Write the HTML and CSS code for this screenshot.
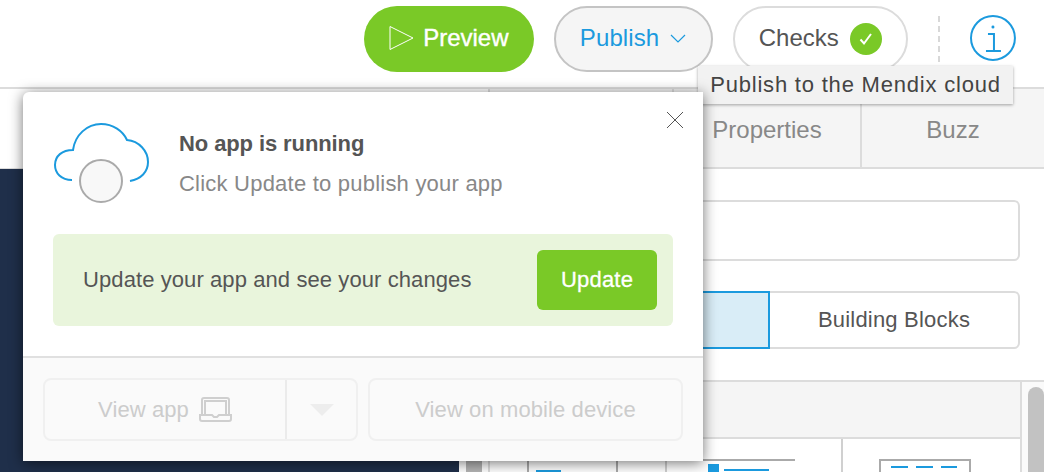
FILE: index.html
```html
<!DOCTYPE html>
<html lang="en">
<head>
<meta charset="UTF-8">
<meta name="viewport" content="width=device-width, initial-scale=1.0">
<title>Publish</title>
<link rel="stylesheet" href="styles.css">
</head>
<body>

<div class="page">
  <header class="topbar">
    <button class="pill pill-preview">
      <svg class="play-icon" width="25" height="26" viewBox="0 0 25 26"><path d="M1 1.500 L24 13 L1 24.500 Z" fill="none" stroke="#fff" stroke-width="1"/></svg>
      Preview
    </button>
    <button class="pill pill-publish">
      Publish
      <svg width="16" height="9" viewBox="0 0 16 9"><path d="M1 1 L8 8 L15 1" fill="none" stroke="#1b9ade" stroke-width="1.200"/></svg>
    </button>
    <button class="pill pill-checks">
      Checks
      <span class="check-badge">
        <svg width="18" height="18" viewBox="0 0 18 18"><path d="M3.500 9.500 L7 13.500 L14 4" fill="none" stroke="#fff" stroke-width="2"/></svg>
      </span>
    </button>
    <span class="bar-divider"></span>
    <svg class="info-icon" width="46" height="46" viewBox="0 0 46 46">
      <circle cx="23" cy="23" r="22" fill="none" stroke="#1b9ade" stroke-width="2"/>
      <circle cx="23" cy="12" r="1.500" fill="#1b9ade"/>
      <path d="M18 19 H24 V36 M16 36 H31" fill="none" stroke="#1b9ade" stroke-width="2"/>
    </svg>
  </header>

  <div class="workspace">
    <div class="left-col">
      <div class="left-white"></div>
      <div class="left-navy"></div>
    </div>

    <div class="gutter"><div class="gutter-thumb"></div></div>

    <div class="right-col">
      <div class="tabs">
        <div class="tab tab-blank"></div>
        <div class="tab tab-properties">Properties</div>
        <div class="tab tab-buzz">Buzz</div>
      </div>

      <div class="panel">
        <div class="search-box"></div>
        <div class="toggle">
          <div class="toggle-on"></div>
          <div class="toggle-off">Building Blocks</div>
        </div>
        <div class="list">
          <div class="list-main">
            <div class="list-head"></div>
            <div class="cards">
              <div class="card card-a"></div>
              <div class="card card-b"><span class="blue-bar"></span></div>
              <div class="card card-c"></div>
              <div class="card card-d">
                <svg width="92" height="22" viewBox="0 0 92 22"><path d="M0 1 H92" stroke="#aaa" stroke-width="2"/><rect x="5" y="5" width="11" height="17" fill="#1b9ade"/><path d="M21 11 H66" stroke="#1b9ade" stroke-width="2"/></svg>
              </div>
              <div class="card card-e">
                <svg width="92" height="22" viewBox="0 0 92 22"><path d="M1 22 V1 H91 V22" fill="none" stroke="#aaa" stroke-width="2"/><path d="M12 8 H29 M37 8 H54 M62 8 H78" stroke="#1b9ade" stroke-width="2"/></svg>
              </div>
            </div>
          </div>
          <div class="scroll-track"><div class="scroll-thumb"></div></div>
        </div>
      </div>
    </div>
  </div>

  <div class="tooltip">Publish to the Mendix cloud</div>

  <div class="popover">
    <button class="popover-close">
      <svg width="18" height="18" viewBox="0 0 18 18"><path d="M1 1 L17 17 M17 1 L1 17" stroke="#555" stroke-width="1"/></svg>
    </button>
    <div class="popover-body">
      <div class="status-row">
        <svg class="cloud-icon" width="98" height="82" viewBox="0 0 98 82">
          <path d="M19 58 C8 58 2 51 2 43 C2 34 9 28 20 28 C22 13 34 2 48 2 C60 2 70 9 74 18 C86 19 95 29 95 40 C95 50 88 57 77 59" fill="none" stroke="#1b9ade" stroke-width="2"/>
          <circle cx="48" cy="59" r="21" fill="#f8f8f8" stroke="#aaa" stroke-width="2"/>
        </svg>
        <div class="status-text">
          <div class="status-title">No app is running</div>
          <div class="status-sub">Click Update to publish your app</div>
        </div>
      </div>
      <div class="update-box">
        <span>Update your app and see your changes</span>
        <button class="update-btn">Update</button>
      </div>
    </div>
    <div class="popover-foot">
      <div class="split-btn">
        <div class="split-main">
          View app
          <svg width="33" height="25" viewBox="0 0 33 25"><path d="M3 18 V3 Q3 1 5 1 H28 Q30 1 30 3 V18 M6 17 V4 H27 V17" fill="none" stroke="#cfcfcf" stroke-width="2"/><path d="M1 18 H13 L15 20 H18 L20 18 H32 V22 Q32 24 30 24 H3 Q1 24 1 22 Z" fill="none" stroke="#cfcfcf" stroke-width="2"/></svg>
        </div>
        <div class="split-arrow"><span class="arrow-down"></span></div>
      </div>
      <div class="mobile-btn">View on mobile device</div>
    </div>
  </div>
</div>

</body>
</html>
```

FILE: styles.css
```css
* {
  box-sizing: border-box;
}
html, body {
  margin: 0;
  padding: 0;
  overflow: hidden;
}
body {
  font-family: 'Liberation Sans', Arial, sans-serif;
  background-color: #fff;
}
button {
  font-family: inherit;
}
.page {
  position: relative;
  width: 1044px;
  height: 472px;
  overflow: hidden;
}

/* top bar */
.topbar {
  height: 89px;
  display: flex;
  align-items: flex-start;
  padding: 6px 28px 0 364px;
  background-color: #fff;
  border-bottom: 2px solid #dcdcdc;
}
.pill {
  height: 66px;
  border-radius: 33px;
  font-size: 24px;
  display: flex;
  align-items: center;
  justify-content: center;
}
.pill-preview {
  width: 170px;
  padding: 0 0 2px 0;
  background-color: #7ac927;
  border: none;
  color: #fff;
  gap: 9px;
  -webkit-text-stroke: 0.4px #fff;
}
.pill-publish {
  width: 160px;
  margin-left: 20px;
  padding: 0 1px 2px 0;
  background-color: #f5f5f5;
  border: 2px solid #c4c4c4;
  color: #1b9ade;
  gap: 11px;
  letter-spacing: 0.1px;
}
.pill-checks {
  width: 175px;
  margin-left: 20px;
  padding: 0 1px 2px 0;
  background-color: #fff;
  border: 2px solid #dcdcdc;
  color: #555;
  gap: 11px;
}
.check-badge {
  width: 32px;
  height: 32px;
  margin-top: 2px;
  border-radius: 50%;
  background-color: #7ac927;
  display: flex;
  align-items: center;
  justify-content: center;
}
.bar-divider {
  height: 46px;
  margin: 10px 30px 0 30px;
  border-left: 2px dashed #d8d8d8;
}
.info-icon {
  margin-top: 9px;
}

/* background */
.workspace {
  display: flex;
  height: 383px;
}
.left-col {
  flex: none;
  width: 459px;
  display: flex;
  flex-direction: column;
}
.left-white {
  height: 80px;
  background-color: #fff;
  border-bottom: 1px solid #dcdcdc;
}
.left-navy {
  flex: 1;
  background-color: #1f2f4a;
}
.gutter {
  flex: none;
  width: 29px;
  padding: 300px 0 0 7px;
  background-color: #fff;
}
.gutter-thumb {
  width: 16px;
  height: 83px;
  background-color: #b4b4b4;
}
.right-col {
  flex: 1;
  border-left: 2px solid #dcdcdc;
}
.tabs {
  display: flex;
  height: 80px;
  background-color: #f5f5f5;
  border-bottom: 2px solid #dcdcdc;
  font-size: 24px;
  color: #888;
}
.tab {
  display: flex;
  align-items: center;
  justify-content: center;
  padding-top: 3px;
  border-right: 2px solid #dcdcdc;
}
.tab-blank {
  width: 184px;
}
.tab-properties {
  width: 188px;
}
.tab-buzz {
  flex: 1;
  border-right: none;
}
.panel {
  padding: 31px 24px 0 10px;
}
.search-box {
  height: 61px;
  background-color: #fff;
  border: 2px solid #dcdcdc;
  border-radius: 6px;
}
.toggle {
  display: flex;
  height: 58px;
  margin-top: 30px;
}
.toggle-on {
  width: 270px;
  background-color: #d9edf7;
  border: 2px solid #1b9ade;
}
.toggle-off {
  flex: 1;
  display: flex;
  align-items: center;
  justify-content: center;
  font-size: 22px;
  letter-spacing: 0.2px;
  color: #555;
  border: 2px solid #dcdcdc;
  border-left: none;
  border-radius: 0 6px 6px 0;
}
.list {
  display: flex;
  height: 120px;
  margin: 31px -24px 0 -10px;
  border-top: 2px solid #dcdcdc;
}
.list-main {
  flex: 1;
  border-right: 2px solid #dcdcdc;
  background-color: #f5f5f5;
}
.list-head {
  height: 55px;
}
.cards {
  display: flex;
  height: 40px;
  background-color: #fff;
  border-top: 2px solid #dcdcdc;
}
.card {
  border-right: 2px solid #d0d0d0;
  padding: 20px 0 0 36px;
  overflow: hidden;
}
.card-a {
  width: 39px;
  border-right-color: #aaa;
}
.card-b {
  width: 89px;
  padding: 31px 0 0 7px;
  border-right-color: #aaa;
}
.blue-bar {
  display: block;
  width: 25px;
  height: 4px;
  background-color: #1b9ade;
}
.card-c {
  width: 49px;
}
.card-d {
  width: 176px;
}
.card-e {
  flex: 1;
  border-right: none;
}
.scroll-track {
  flex: none;
  width: 22px;
  padding: 5px 0 0 6px;
  background-color: #fafafa;
}
.scroll-thumb {
  width: 16px;
  height: 100px;
  border-radius: 8px 8px 0 0;
  background-color: #c2c2c2;
}

/* tooltip */
.tooltip {
  position: absolute;
  left: 698px;
  top: 66px;
  width: 315px;
  height: 38px;
  font-size: 22px;
  letter-spacing: 0.8px;
  line-height: 38px;
  text-align: center;
  color: #444;
  background-color: #f2f2f2;
  box-shadow: 0 1px 3px rgba(0, 0, 0, 0.35);
}

/* popover */
.popover {
  position: absolute;
  left: 23px;
  top: 92px;
  width: 680px;
  height: 369px;
  background-color: #fff;
  border-radius: 6px 0 0 0;
  box-shadow: 0 2px 14px rgba(0, 0, 0, 0.55);
  display: flex;
  flex-direction: column;
}
.popover-close {
  position: absolute;
  right: 19px;
  top: 19px;
  padding: 0;
  border: none;
  background: none;
  width: 18px;
  height: 18px;
}
.popover-body {
  flex: 1;
  padding: 30px 30px 0 30px;
}
.status-row {
  display: flex;
  align-items: flex-start;
  height: 112px;
}
.status-text {
  margin-left: 28px;
  padding-top: 9px;
  font-size: 22px;
}
.status-title {
  font-weight: 700;
  letter-spacing: -0.1px;
  color: #555;
}
.status-sub {
  margin-top: 14px;
  letter-spacing: 0.22px;
  color: #888;
}
.update-box {
  height: 92px;
  display: flex;
  align-items: center;
  justify-content: space-between;
  padding: 0 16px 0 30px;
  background-color: #e9f5dc;
  border-radius: 6px;
  font-size: 22px;
  letter-spacing: 0.09px;
  color: #555;
}
.update-btn {
  width: 120px;
  height: 60px;
  border: none;
  border-radius: 6px;
  background-color: #7ac927;
  color: #fff;
  font-size: 22px;
  letter-spacing: 0.2px;
  -webkit-text-stroke: 0.3px #fff;
}
.popover-foot {
  height: 105px;
  display: flex;
  gap: 10px;
  padding: 20px 20px 0 20px;
  background-color: #fafafa;
  border-top: 2px solid #e0e0e0;
  font-size: 22px;
  letter-spacing: 0.1px;
  color: #ccc;
}
.split-btn {
  display: flex;
  width: 315px;
  height: 63px;
  border: 2px solid #f0f0f0;
  border-radius: 8px;
}
.split-main {
  flex: 1;
  display: flex;
  align-items: center;
  justify-content: center;
  gap: 10px;
  border-right: 2px solid #ebebeb;
}
.split-arrow {
  width: 69px;
  display: flex;
  align-items: center;
  justify-content: center;
}
.arrow-down {
  width: 0;
  height: 0;
  border-left: 12px solid transparent;
  border-right: 12px solid transparent;
  border-top: 12px solid #ededed;
}
.mobile-btn {
  flex: 1;
  height: 63px;
  display: flex;
  align-items: center;
  justify-content: center;
  border: 2px solid #f0f0f0;
  border-radius: 8px;
}
```
